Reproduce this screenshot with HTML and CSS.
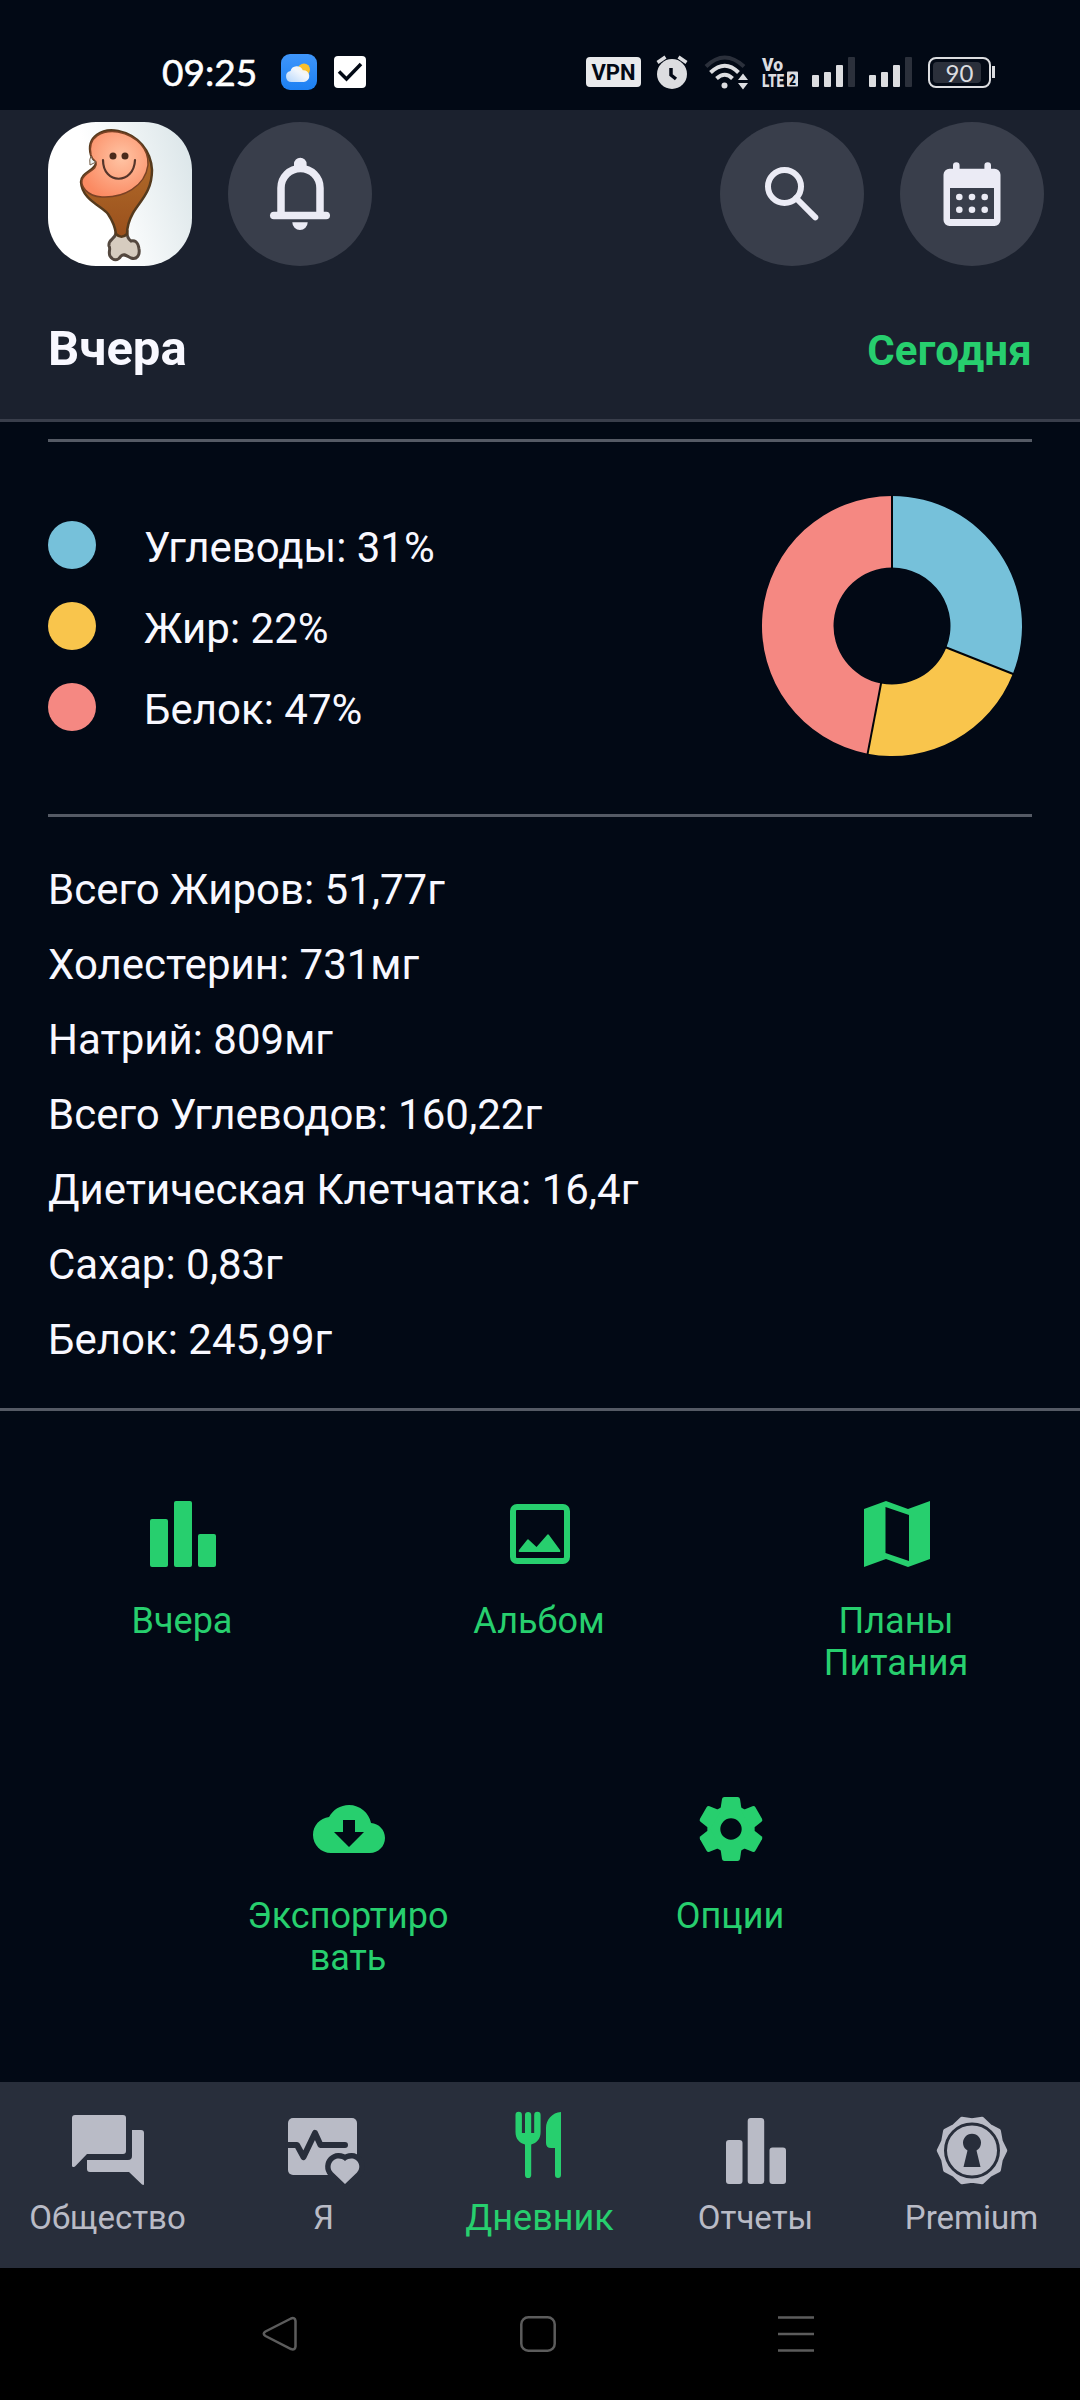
FILE: index.html
```html
<!DOCTYPE html>
<html lang="ru">
<head>
    <meta charset="UTF-8">
    <meta name="viewport" content="width=device-width, initial-scale=1.0">
    <title>Дневник питания</title>
    <link rel="stylesheet" href="styles.css">
</head>
<body>
    <div class="status-bar">
        <span class="clock">09:25</span>
        <svg class="weather" width="36" height="36" viewBox="0 0 36 36">
            <defs>
                <linearGradient id="sky" x1="0" y1="0" x2="0" y2="1"><stop offset="0" stop-color="#3f96fb"/><stop offset="1" stop-color="#1c80f3"/></linearGradient>
                <linearGradient id="cloudFill" x1="1" y1="0" x2="0" y2="1"><stop offset="0" stop-color="#fff3d2"/><stop offset=".4" stop-color="#f1f6fd"/><stop offset="1" stop-color="#b5d6fb"/></linearGradient>
            </defs>
            <rect width="36" height="36" rx="9" fill="url(#sky)"/>
            <circle cx="23" cy="15.500" r="6" fill="#fbc02b"/>
            <path d="M10.500 28a5.500 5.500 0 0 1-1-10.900 6.500 6.500 0 0 1 12.300-.8 5.500 5.500 0 0 1 1.200 11.700z" fill="url(#cloudFill)"/>
        </svg>
        <svg class="task" width="32" height="32" viewBox="0 0 32 32">
            <rect width="32" height="32" rx="4" fill="#fff"/>
            <path d="M5 15.500l7.500 7.500L27 8" fill="none" stroke="#020915" stroke-width="3.500"/>
        </svg>
        <div class="status-right">
            <span class="vpn">VPN</span>
            <svg class="alarm" width="32" height="35" viewBox="0 0 32 35">
                <circle cx="16" cy="19" r="15" fill="#dcdde0"/>
                <path d="M1.500 7.500l8-5.500M30.500 7.500l-8-5.500" stroke="#dcdde0" stroke-width="3.500"/>
                <path d="M15 13v7l5 4" fill="none" stroke="#020915" stroke-width="3.500"/>
            </svg>
            <svg class="wifi" width="45" height="35" viewBox="0 0 45 35" fill="none" stroke="#dcdde0" stroke-width="4">
                <path d="M2 11.500q18.500-18 38 0" stroke="#2b303b"/>
                <path d="M6.500 17.500q14.500-13.500 28 0"/>
                <path d="M12.500 23.500q8.500-7.500 16 0"/>
                <circle cx="20.500" cy="30.500" r="3" fill="#dcdde0" stroke="none"/>
                <path d="M34 25l5-6.500 5 6.500zM34 28l5 6.500 5-6.500z" fill="#dcdde0" stroke="none"/>
            </svg>
            <svg class="volte" width="36" height="30" viewBox="0 0 36 30">
                <text x="0" y="14" textLength="21" lengthAdjust="spacingAndGlyphs">Vo</text>
                <text x="0" y="29.500" textLength="22" lengthAdjust="spacingAndGlyphs">LTE</text>
                <rect x="25" y="14.500" width="11" height="15" rx="1"/>
                <text class="sim" x="27" y="27.500" textLength="7" lengthAdjust="spacingAndGlyphs">2</text>
            </svg>
            <svg class="signal" width="44" height="30" viewBox="0 0 44 30" fill="#dcdde0">
                <rect y="18" width="7" height="12" rx="1"/><rect x="12" y="15" width="7" height="15" rx="1"/>
                <rect x="24" y="8" width="7" height="22" rx="1"/><rect x="36" width="7" height="30" rx="1" fill="#2b303b"/>
            </svg>
            <svg class="signal" width="44" height="30" viewBox="0 0 44 30" fill="#dcdde0">
                <rect y="18" width="7" height="12" rx="1"/><rect x="12" y="15" width="7" height="15" rx="1"/>
                <rect x="24" y="8" width="7" height="22" rx="1"/><rect x="36" width="7" height="30" rx="1" fill="#2b303b"/>
            </svg>
            <span class="battery"><span class="battery-level">90</span></span>
            <span class="battery-tip"></span>
        </div>
    </div>

    <div class="header">
        <div class="header-buttons">
            <svg class="avatar" viewBox="0 0 144 144">
                <defs>
                    <linearGradient id="avatarBg" x1="0" y1=".6" x2="1" y2=".3"><stop offset=".35" stop-color="#fff"/><stop offset="1" stop-color="#dde7ea"/></linearGradient>
                    <linearGradient id="crust" x1="0" y1="0" x2="0" y2="1"><stop offset="0" stop-color="#b9742f"/><stop offset="1" stop-color="#9a501c"/></linearGradient>
                    <radialGradient id="meat" cx=".6" cy=".4" r=".65"><stop offset="0" stop-color="#ffc4a4"/><stop offset="1" stop-color="#fb8a62"/></radialGradient>
                </defs>
                <rect width="144" height="144" fill="url(#avatarBg)"/>
                <path d="M68 111C67 118 60 117 61 124 63 127 60 130 62 134 65 139 70 139 73 134 76 131 79 134 83 136 89 138 92 133 91 127 90 119 86 118 83 119 80 117 79 113 79 110z" fill="#d6ccbf" stroke="#54483f" stroke-width="3"/>
                <path d="M43 33C38 14 55 6 70 9 90 13 103 29 104 48 104 70 92 79 85 91 80 100 79 105 79 112 75 116 71 115 68 112 67 104 64 98 60 92 54 84 34 78 33 60 33 50 49 48 48 40z" fill="url(#crust)" stroke="#553a1d" stroke-width="2.500"/>
                <path d="M43 33C39 14 55 8 70 10 90 14 101 28 100 43 97 65 75 76 54 75 38 74 33 64 34 58 37 49 50 49 48 40 46 38 44 37 43 33z" fill="url(#meat)" stroke="#7b4224" stroke-width="1.500"/>
                <path d="M43 34q-2 3-1 9l6-3q-4-1-5-6z" fill="#eaf0ef" stroke="#735d48" stroke-width="1"/>
                <circle cx="65" cy="34" r="3.500" fill="#4a2b1b"/><circle cx="77" cy="34" r="3.500" fill="#4a2b1b"/>
                <path d="M55 38c0 25 31 25 32 0" fill="none" stroke="#55352a" stroke-width="2.200" stroke-linecap="round"/>
            </svg>
            <svg class="round-btn" viewBox="0 0 144 144" fill="#ebebf5">
                <path d="M53 92V66a19.500 19.500 0 0 1 39 0v26" fill="none" stroke="#ebebf5" stroke-width="7.500"/>
                <rect x="42" y="89.700" width="60" height="7.600" rx="3.800"/>
                <path d="M66 46v-4a6.300 6.300 0 0 1 12.600 0v4zM64.300 100.300h15.400a7.700 7.700 0 0 1-15.400 0z"/>
            </svg>
            <svg class="round-btn push-right" viewBox="0 0 144 144" fill="none" stroke="#ebebf5" stroke-width="6">
                <circle cx="64.500" cy="64.500" r="16.500"/>
                <path d="M76 76l19.300 19.300" stroke-linecap="round"/>
            </svg>
            <svg class="round-btn" viewBox="0 0 144 144" fill="#ebebf5">
                <path fill-rule="evenodd" d="M49.500 46.700h45a6 6 0 0 1 6 6V98a6 6 0 0 1-6 6h-45a6 6 0 0 1-6-6V52.700a6 6 0 0 1 6-6zM50 66v31h44V66z"/>
                <path d="M53 48v-4.500a3.300 3.300 0 0 1 6.600 0V48zM84.400 48v-4.500a3.300 3.300 0 0 1 6.600 0V48z"/>
                <circle cx="59.300" cy="75" r="3.300"/><circle cx="72" cy="75" r="3.300"/><circle cx="84.700" cy="75" r="3.300"/>
                <circle cx="59.300" cy="87.700" r="3.300"/><circle cx="72" cy="87.700" r="3.300"/><circle cx="84.700" cy="87.700" r="3.300"/>
            </svg>
        </div>
        <div class="header-title">
            <h1>Вчера</h1>
            <a class="today-link">Сегодня</a>
        </div>
    </div>

    <div class="content">
        <div class="macros">
            <ul class="legend">
                <li><span class="dot carbs"></span><span class="legend-text">Углеводы: 31%</span></li>
                <li><span class="dot fat"></span><span class="legend-text">Жир: 22%</span></li>
                <li><span class="dot protein"></span><span class="legend-text">Белок: 47%</span></li>
            </ul>
            <svg class="donut" viewBox="-130 -130 260 260">
                <!-- 31 / 22 / 47 % -->
                <path fill="#76c1da" d="M0-130A130 130 0 0 1 120.870 47.860L54.390 21.540A58.500 58.500 0 0 0 0-58.500z"/>
                <path fill="#f9c54c" d="M120.870 47.860A130 130 0 0 1-24.360 127.700L-10.960 57.460A58.500 58.500 0 0 0 54.390 21.540z"/>
                <path fill="#f58882" d="M-24.360 127.700A130 130 0 0 1 0-130V-58.500A58.500 58.500 0 0 0-10.960 57.460z"/>
                <g stroke="#020409" stroke-width="2">
                    <path d="M0-57v-74"/>
                    <path d="M0-57v-74" transform="rotate(111.600)"/>
                    <path d="M0-57v-74" transform="rotate(190.800)"/>
                </g>
            </svg>
        </div>
        <div class="nutrients">
            <p>Всего Жиров: 51,77г</p>
            <p>Холестерин: 731мг</p>
            <p>Натрий: 809мг</p>
            <p>Всего Углеводов: 160,22г</p>
            <p>Диетическая Клетчатка: 16,4г</p>
            <p>Сахар: 0,83г</p>
            <p>Белок: 245,99г</p>
        </div>
    </div>

    <div class="actions">
        <div class="actions-row">
            <a class="action">
                <svg viewBox="0 0 72 72"><rect x="3" y="21" width="18" height="48" rx="2"/><rect x="27" y="3" width="18" height="66" rx="2"/><rect x="51" y="36" width="18" height="33" rx="2"/></svg>
                <span>Вчера</span>
            </a>
            <a class="action">
                <svg viewBox="0 0 72 72"><rect x="9" y="9" width="54" height="54" rx="4" fill="none" stroke="#27cf6e" stroke-width="6"/><path d="M15 52l8-10q1-1.500 2 0l7.500 7L43 37q1-1.500 2 0l11 15q1 2-1 2H16q-2 0-1-2z"/></svg>
                <span>Альбом</span>
            </a>
            <a class="action">
                <svg viewBox="0 0 72 72"><path fill-rule="evenodd" d="M3 11l22-8 22 8 22-8v58l-22 8-22-8-22 8zM24.500 9v46L48 63V17z"/></svg>
                <span>Планы Питания</span>
            </a>
        </div>
        <div class="actions-row second">
            <a class="action">
                <svg viewBox="0 0 24 24"><path d="M19.350 10.040C18.670 6.590 15.640 4 12 4 9.110 4 6.600 5.640 5.350 8.040 2.340 8.360 0 10.910 0 14c0 3.310 2.690 6 6 6h13c2.760 0 5-2.240 5-5 0-2.640-2.050-4.780-4.650-4.960zM17 13l-5 5-5-5h3V9h4v4h3z"/></svg>
                <span>Экспортировать</span>
            </a>
            <a class="action">
                <svg viewBox="-36 -36 72 72">
                    <defs><path id="tooth" d="M-10.800-18l1.800-12q.4-2 2.400-2H6.600q2 0 2.400 2l1.800 12z"/></defs>
                    <circle r="17.200" fill="none" stroke="#27cf6e" stroke-width="13"/>
                    <use href="#tooth"/><use href="#tooth" transform="rotate(60)"/><use href="#tooth" transform="rotate(120)"/>
                    <use href="#tooth" transform="rotate(180)"/><use href="#tooth" transform="rotate(240)"/><use href="#tooth" transform="rotate(300)"/>
                </svg>
                <span>Опции</span>
            </a>
        </div>
    </div>

    <div class="tabs">
        <a class="tab">
            <svg viewBox="0 0 72 72"><path d="M3 1h48q3 0 3 3v33q0 3-3 3H15L3 52.500q-3 1.500-3-1V4q0-3 3-3zM60 16h9q3 0 3 3v51q0 1.500-2 .5L57 58H18q-3 0-3-3v-9h41q4 0 4-4z"/></svg>
            <span>Общество</span>
        </a>
        <a class="tab">
            <svg viewBox="0 0 72 72">
                <rect y="4" width="69" height="57" rx="5"/>
                <path d="M0 31h9l6.500 12L27 19l5.500 12H57" fill="none" stroke="#282e3b" stroke-width="6" stroke-linecap="round" stroke-linejoin="round"/>
                <path d="M57 70L45 58.500c-7-8 3-19 12-11.500 9-7.500 19 3.500 12 11.500z" stroke="#282e3b" stroke-width="11" paint-order="stroke"/>
            </svg>
            <span>Я</span>
        </a>
        <a class="tab active">
            <svg viewBox="0 0 72 72">
                <path d="M11.500 1a3.200 3.200 0 0 1 6.400 0v18H21V1a3.100 3.100 0 0 1 6.200 0v18h3V1a3.200 3.200 0 0 1 6.400 0v17c0 7-4 11-9.400 12.500V61a3.100 3.100 0 0 1-6.200 0V30.500c-5.500-1.500-9.500-5.500-9.500-12.500z"/>
                <path d="M57-2C48-1.500 42 6 42 14v15q0 5 5 5h4v27a3 3 0 0 0 6 0z"/>
            </svg>
            <span>Дневник</span>
        </a>
        <a class="tab">
            <svg viewBox="0 0 72 72"><rect x="6" y="26" width="16.500" height="44" rx="3"/><rect x="27.700" y="4" width="16.500" height="66" rx="3"/><rect x="49.500" y="33.500" width="16.500" height="36.500" rx="3"/></svg>
            <span>Отчеты</span>
        </a>
        <a class="tab">
            <svg viewBox="-36 -36.500 72 72">
                <path d="M33 0L28.500 9.300 26.700 19.400 17.600 24.300 10.200 31.400 0 30-10.200 31.400-17.600 24.300-26.700 19.400-28.500 9.300-33 0-28.500-9.300-26.700-19.400-17.600-24.300-10.200-31.400 0-30 10.200-31.400 17.600-24.300 26.700-19.400 28.500-9.300z" stroke="#b9bbc6" stroke-width="4.500" stroke-linejoin="round"/>
                <circle r="26.500" fill="none" stroke="#282e3b" stroke-width="3"/>
                <path d="M-4.500 0a9 9 0 1 1 9 0L8.500 16.500h-17z" fill="#282e3b"/>
            </svg>
            <span>Premium</span>
        </a>
    </div>

    <div class="system-nav">
        <svg viewBox="0 0 36 36"><path d="M29 2.500L3.500 15.500q-3.500 2.200 0 4.500L29 33q4 1.500 4.500-2.500V5q-.5-4-4.500-2.500z"/></svg>
        <svg viewBox="0 0 36 36"><rect x="1.300" y="1.300" width="33.400" height="33.400" rx="7"/></svg>
        <svg viewBox="0 0 36 36"><path d="M0 1.500h36M0 18h36M0 34.500h36"/></svg>
    </div>
</body>
</html>
```

FILE: styles.css
```css
* { box-sizing: border-box; }
body { margin: 0; width: 1080px; height: 2400px; display: flex; flex-direction: column; background-color: #020915; color: #f8f8ff; font-family: Roboto, sans-serif; font-size: 42px; overflow: hidden; }
svg { display: block; flex-shrink: 0; overflow: visible; }
h1, p, ul { margin: 0; padding: 0; }

/* Status bar */
.status-bar { height: 110px; flex-shrink: 0; display: flex; align-items: center; padding: 34px 85px 0 162px; color: #fff; }
.status-bar .clock { font-family: Lato, sans-serif; font-size: 37px; font-weight: 400; line-height: 40px; width: 119px; -webkit-text-stroke: 0.6px #fff; }
.task { margin-left: 17px; }
.status-right { margin-left: auto; display: flex; align-items: center; }
.vpn { width: 55px; height: 30px; border-radius: 4px; background-color: #e9eaec; color: #020915; font: bold 22px/31px Roboto, sans-serif; text-align: center; }
.alarm { margin-left: 15px; }
.wifi { margin-left: 16px; }
.volte { margin-left: 13px; fill: #dcdde0; font-size: 19px; font-weight: 900; }
.volte .sim { fill: #020915; font-size: 15px; }
.signal { margin-left: 14px; }
.signal + .signal { margin-left: 13px; }
.battery { width: 63px; height: 31px; margin-left: 15px; padding: 3px; border: 2px solid #dcdde0; border-radius: 8px; }
.battery-level { display: block; width: 48px; height: 21px; background-color: #2b303b; border-radius: 4px; color: #dcdde0; font: 24px/22px Lato, sans-serif; text-align: center; padding-left: 5px; }
.battery-tip { width: 3px; height: 12px; margin-left: 1px; background-color: #dcdde0; }

/* Header */
.header { height: 312px; flex-shrink: 0; padding: 12px 36px 0 48px; background-color: #1b212e; border-bottom: 3px solid #393e4b; }
.header-buttons { display: flex; gap: 36px; }
.avatar { width: 144px; height: 144px; border-radius: 48px; overflow: hidden; }
.round-btn { width: 144px; height: 144px; border-radius: 50%; background-color: #393e4b; }
.push-right { margin-left: auto; }
.header-title { display: flex; justify-content: space-between; align-items: baseline; margin-top: 53px; padding-right: 12px; line-height: 60px; }
.header-title h1 { font-size: 49px; font-weight: bold; }
.today-link { color: #27cf6e; font-weight: bold; letter-spacing: 0.25px; }

/* Diary summary */
.content { height: 989px; flex-shrink: 0; padding: 17px 48px 0; border-bottom: 3px solid #555a65; }
.macros { height: 378px; display: flex; justify-content: space-between; border-top: 3px solid #555a65; border-bottom: 3px solid #555a65; padding-right: 10px; }
.legend { list-style: none; margin-top: 79px; display: flex; flex-direction: column; gap: 33px; }
.legend li { display: flex; align-items: center; gap: 48px; height: 48px; line-height: 48px; }
.legend-text { padding-top: 5px; }
.dot { width: 48px; height: 48px; border-radius: 50%; }
.carbs { background-color: #76c1da; }
.fat { background-color: #f9c54c; }
.protein { background-color: #f58882; }
.donut { width: 260px; height: 260px; margin-top: 54px; }
.nutrients { padding-top: 35px; line-height: 75px; }

/* Actions */
.actions { flex-grow: 1; padding-top: 87px; color: #27cf6e; fill: #27cf6e; }
.actions-row { display: flex; justify-content: center; gap: 149px; height: 186px; }
.actions-row.second { gap: 174px; margin-top: 109px; }
.action { width: 208px; display: flex; flex-direction: column; align-items: center; font-size: 36px; line-height: 42px; text-align: center; word-break: break-all; }
.actions-row:first-child .action { word-break: normal; }
.action svg { width: 72px; height: 72px; margin-bottom: 30px; }
.action span { width: 206px; margin-left: -2px; }

/* Tabs */
.tabs { height: 186px; flex-shrink: 0; display: flex; background-color: #282e3b; color: #b9bbc6; fill: #b9bbc6; }
.tab { width: 216px; padding-top: 32px; display: flex; flex-direction: column; align-items: center; gap: 12px; font-size: 33px; line-height: 40px; }
.tab svg { width: 72px; height: 72px; }
.tab span { margin-left: -1px; }
.tab.active { color: #27cf6e; fill: #27cf6e; font-size: 36px; }

.system-nav { height: 132px; flex-shrink: 0; display: flex; justify-content: center; gap: 222px; padding: 48px 4px 0 0; background-color: #000; }
.system-nav svg { width: 36px; height: 36px; fill: none; stroke: #5c5c5c; stroke-width: 2.5; }
```
